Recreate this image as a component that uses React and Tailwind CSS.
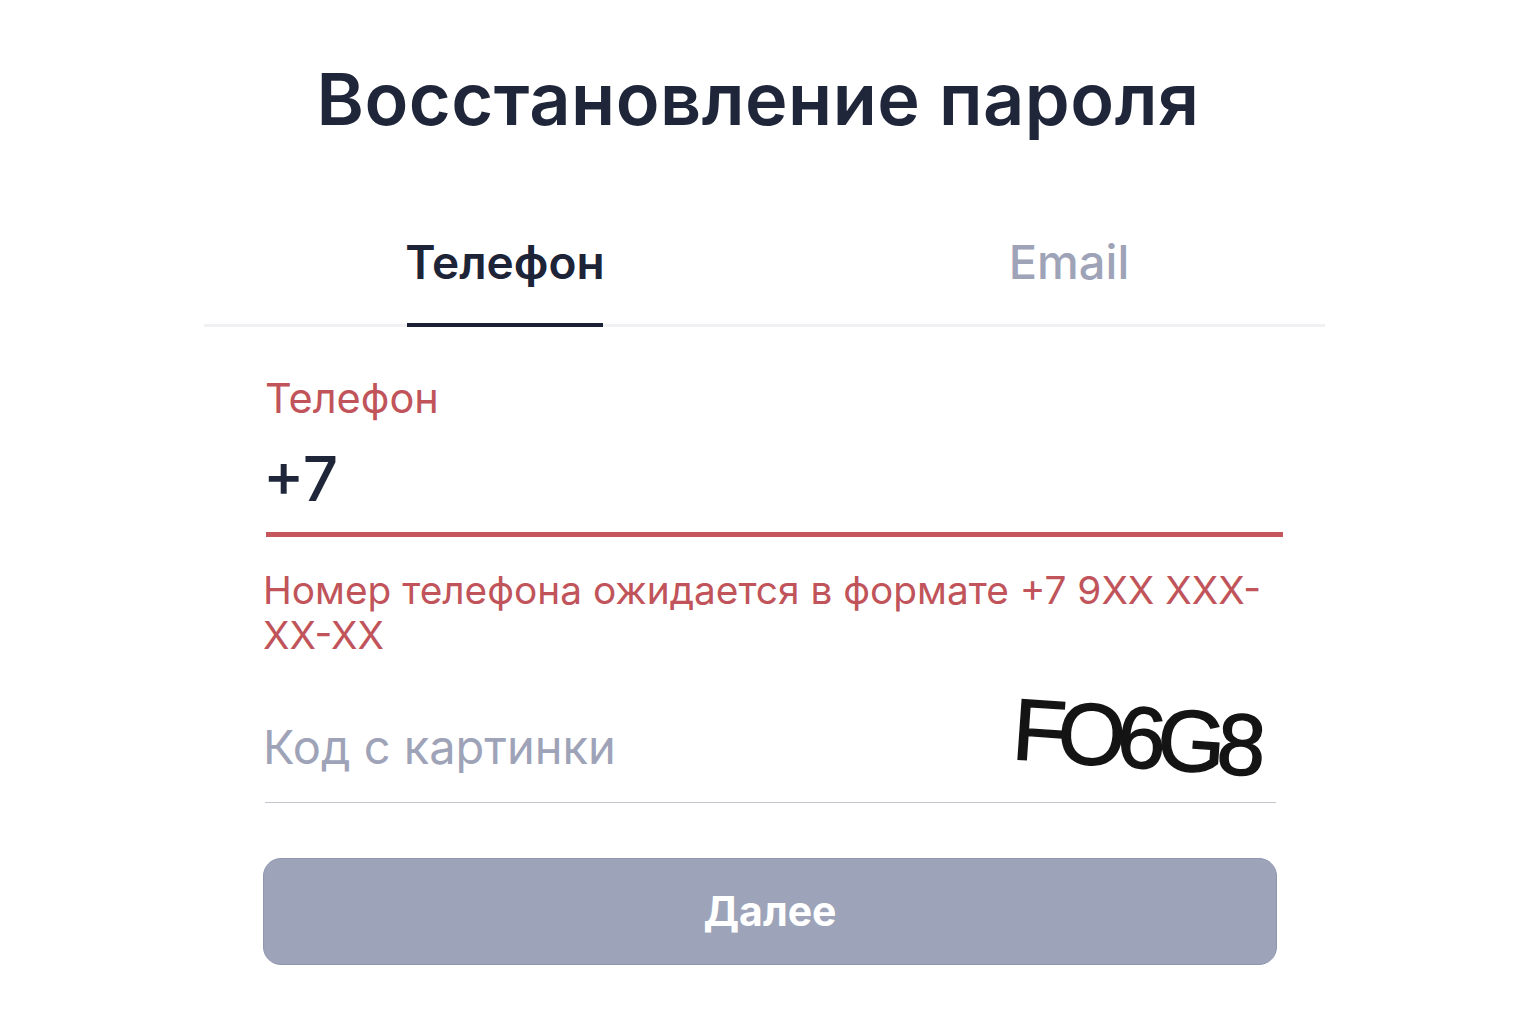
const App = () => {
  return (
    <div className="min-h-screen bg-white font-['Inter','Noto_Sans',sans-serif] pt-[55px]">
      <div className="ml-[204px] w-[1121px]">
        <h1 className="pr-[13px] text-center text-[72px] leading-[88px] font-semibold tracking-[0.5px] text-[#1f2639]">
          Восстановление пароля
        </h1>

        {/* tabs */}
        <div className="mt-[77px] flex h-[107px] border-b-[3px] border-[#f1f1f3]">
          <div className="w-[603px] pl-[203px]">
            <div className="flex h-[107px] w-[196px] justify-center border-b-4 border-[#1a2035] text-[46px] leading-[84px] font-semibold whitespace-nowrap text-[#1d2438]">
              Телефон
            </div>
          </div>
          <div className="w-[518px] pl-[6px] text-center text-[47px] leading-[84px] font-medium text-[#9ea3b8]">
            Email
          </div>
        </div>

        <div className="ml-[59px] w-[1020px]">
          {/* phone */}
          <div className="pl-[3px] pt-[45px]">
            <div className="-ml-[1px] text-[41.5px] leading-[52px] text-[#c0545a]">Телефон</div>
            <div className="mt-[23px] h-[90px] border-b-[5px] border-[#c5565b] text-[62px] leading-[64px] font-medium text-[#1f2639]">
              <span className="-ml-[3px] inline-block">+7</span>
            </div>
          </div>
          <p className="mt-[30px] w-[1010px] text-[38.8px] leading-[45px] text-[#c0545a]">
            Номер телефона ожидается в формате +7 9XX XXX-XX-XX
          </p>

          {/* captcha */}
          <div className="ml-[2px] mt-[26px] flex h-[120px] w-[1011px] items-start justify-between border-b-[1px] border-[#c4c5cc]">
            <div className="-ml-[2px] pt-[34px] text-[47px] leading-[60px] text-[#9ea3b8]">Код с картинки</div>
            <div className="pr-[18px] pt-[10px] font-['Liberation_Sans',sans-serif] text-[87px] leading-[90px] tracking-[-8px] text-[#141414] rotate-[4deg] [-webkit-text-stroke:1.5px_#141414]">
              FO6G8
            </div>
          </div>

          <button className="mt-[55px] h-[107px] w-[1014px] rounded-[18px] border border-[#8f96b0] bg-[#9da3b9] text-[41px] font-bold text-white">
            Далее
          </button>
        </div>
      </div>
    </div>
  );
};

export default App;
